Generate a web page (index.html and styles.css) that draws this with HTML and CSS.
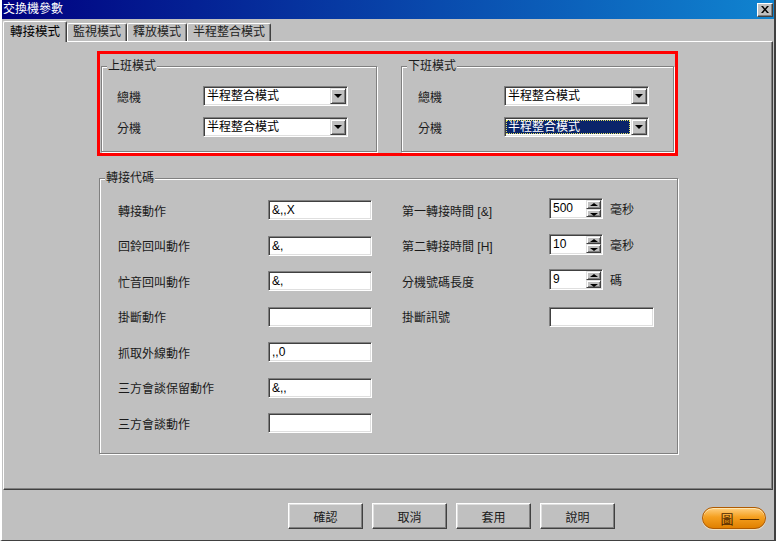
FILE: index.html
```html
<!DOCTYPE html>
<html lang="zh-Hant">
<head>
  <meta charset="UTF-8" />
  <title>交換機參數</title>
  <link rel="stylesheet" href="styles.css">
</head>
<body>
  <div class="window">
    <div class="titlebar">
      <span class="title">交換機參數</span>
      <span class="close">
        <svg width="8" height="7" viewBox="0 0 8 7"><path d="M0 0h2l2 2.5L6 0h2L5 3.5 8 7H6L4 4.5 2 7H0l3-3.5z" fill="#000"/></svg>
      </span>
    </div>

    <div class="tabs">
      <div class="tab active">轉接模式</div>
      <div class="tab">監視模式</div>
      <div class="tab">釋放模式</div>
      <div class="tab">半程整合模式</div>
    </div>

    <div class="panel">
      <div class="highlight">
        <div class="group shift day">
          <div class="group-title">上班模式</div>
          <div class="field">
            <span class="field-label">總機</span>
            <div class="combo"><span class="combo-text">半程整合模式</span><span class="combo-btn"></span></div>
          </div>
          <div class="field">
            <span class="field-label">分機</span>
            <div class="combo"><span class="combo-text">半程整合模式</span><span class="combo-btn"></span></div>
          </div>
        </div>

        <div class="group shift night">
          <div class="group-title">下班模式</div>
          <div class="field">
            <span class="field-label">總機</span>
            <div class="combo"><span class="combo-text">半程整合模式</span><span class="combo-btn"></span></div>
          </div>
          <div class="field">
            <span class="field-label">分機</span>
            <div class="combo focused"><span class="combo-text">半程整合模式</span><span class="combo-btn"></span></div>
          </div>
        </div>
      </div>

      <div class="group codes">
        <div class="group-title">轉接代碼</div>
        <div class="code-grid">
          <span class="code-label">轉接動作</span>
          <div class="textbox">&amp;,,X</div>
          <span class="code-label2">第一轉接時間 [&amp;]</span>
          <div class="spin-cell">
            <div class="spin"><span class="spin-text">500</span><span class="spin-btns"><span class="spin-up"></span><span class="spin-down"></span></span></div>
            <span class="unit">毫秒</span>
          </div>

          <span class="code-label">回鈴回叫動作</span>
          <div class="textbox">&amp;,</div>
          <span class="code-label2">第二轉接時間 [H]</span>
          <div class="spin-cell">
            <div class="spin"><span class="spin-text">10</span><span class="spin-btns"><span class="spin-up"></span><span class="spin-down"></span></span></div>
            <span class="unit">毫秒</span>
          </div>

          <span class="code-label">忙音回叫動作</span>
          <div class="textbox">&amp;,</div>
          <span class="code-label2">分機號碼長度</span>
          <div class="spin-cell">
            <div class="spin"><span class="spin-text">9</span><span class="spin-btns"><span class="spin-up"></span><span class="spin-down"></span></span></div>
            <span class="unit">碼</span>
          </div>

          <span class="code-label">掛斷動作</span>
          <div class="textbox"></div>
          <span class="code-label2">掛斷訊號</span>
          <div class="textbox wide"></div>

          <span class="code-label">抓取外線動作</span>
          <div class="textbox">,,0</div>

          <span class="code-label">三方會談保留動作</span>
          <div class="textbox">&amp;,,</div>

          <span class="code-label">三方會談動作</span>
          <div class="textbox"></div>
        </div>
      </div>
    </div>

    <div class="footer">
      <button class="btn">確認</button>
      <button class="btn">取消</button>
      <button class="btn">套用</button>
      <button class="btn">說明</button>
      <button class="pill"><span>圖</span><span class="pill-dash">一</span></button>
    </div>
  </div>
</body>
</html>
```

FILE: styles.css
```css
html, body {
  margin: 0;
  padding: 0;
  width: 776px;
  height: 541px;
  overflow: hidden;
  background-color: #c0c0c0;
  font-family: "Liberation Sans", "Noto Sans CJK TC", sans-serif;
  font-size: 12px;
  color: #1a1a1a;
}

.window {
  box-sizing: border-box;
  width: 776px;
  height: 541px;
  border-left: 2px solid #fff;
  border-right: 2px solid #404040;
  border-bottom: 1px solid #404040;
}

.titlebar {
  height: 19px;
  display: flex;
  align-items: center;
  justify-content: space-between;
  background: linear-gradient(to right, #000080, #1084d0);
  color: white;
}

.title {
  padding-left: 1px;
  line-height: 19px;
}

.close {
  width: 14px;
  height: 12px;
  margin-right: 1px;
  display: flex;
  align-items: center;
  justify-content: center;
  background-color: #c0c0c0;
  border: 1px solid;
  border-color: #fff #404040 #404040 #fff;
  box-shadow: inset -1px -1px #808080;
}

.tabs {
  display: flex;
  align-items: flex-end;
  height: 20px;
  margin-top: 2px;
  padding-left: 1px;
  position: relative;
  z-index: 1;
}

.tab {
  height: 17px;
  line-height: 17px;
  padding: 0 5px;
  border: 1px solid;
  border-color: #fff #404040 transparent #fff;
  border-bottom: none;
  border-radius: 2px 2px 0 0;
  box-shadow: inset -1px 0 #808080;
  color: #222;
}

.tab.active {
  height: 20px;
  line-height: 21px;
  margin-bottom: -1px;
  padding: 0 6px;
  background-color: #c0c0c0;
  font-size: 12.5px;
  color: #000;
}

.panel {
  box-sizing: border-box;
  height: 449px;
  margin: 0 1px;
  padding: 9px 0 0 93px;
  border: 1px solid;
  border-color: #fff #404040 #404040 #fff;
  box-shadow: inset -1px -1px #808080;
}

.highlight {
  box-sizing: border-box;
  width: 581px;
  height: 105px;
  border: 3px solid #ff0000;
  padding: 12px 0 0 1px;
  display: flex;
  gap: 24px;
}

.group {
  position: relative;
  box-sizing: border-box;
  border: 1px solid #808080;
  box-shadow: inset 1px 1px #fff, 1px 1px #fff;
}

.group-title {
  position: absolute;
  top: -8px;
  left: 5px;
  padding: 0 1px;
  background-color: #c0c0c0;
  line-height: 15px;
}

.shift {
  height: 86px;
  padding: 19px 0 0 15px;
  display: flex;
  flex-direction: column;
  gap: 11px;
}

.day {
  width: 276px;
}

.night {
  width: 273px;
  padding-left: 16px;
}

.field {
  display: flex;
  align-items: center;
}

.field-label {
  width: 86px;
}

.combo {
  box-sizing: border-box;
  width: 145px;
  height: 20px;
  display: flex;
  background-color: white;
  border: 1px solid;
  border-color: #808080 #fff #fff #808080;
  box-shadow: inset 1px 1px #404040, inset -1px -1px #dfdfdf;
  padding: 1px;
}

.combo-text {
  flex: 1;
  padding-left: 2px;
  line-height: 16px;
  color: #000;
}

.combo.focused .combo-text {
  margin: 1px 1px 1px 0;
  line-height: 14px;
  background-color: #0a246a;
  color: white;
  outline: 1px dotted #e0e060;
  outline-offset: -1px;
}

.combo-btn {
  position: relative;
  box-sizing: border-box;
  width: 16px;
  height: 16px;
  background-color: #c0c0c0;
  border: 1px solid;
  border-color: #dfdfdf #404040 #404040 #dfdfdf;
  box-shadow: inset 1px 1px #fff, inset -1px -1px #808080;
}

.combo-btn:after {
  content: "";
  position: absolute;
  left: 3px;
  top: 5px;
  border-left: 4px solid transparent;
  border-right: 4px solid transparent;
  border-top: 4px solid #000;
}

.codes {
  width: 579px;
  height: 276px;
  margin: 22px 0 0 2px;
  padding: 21px 0 0 18px;
}

.code-grid {
  display: grid;
  grid-template-columns: 150px 104px 177px auto;
  grid-auto-rows: 20px;
  row-gap: 15.5px;
  align-items: center;
}

.code-label {
  grid-column: 1;
}

.code-label2 {
  padding-left: 30px;
}

.textbox {
  box-sizing: border-box;
  width: 104px;
  height: 20px;
  padding: 2px 0 0 3px;
  line-height: 15px;
  background-color: white;
  border: 1px solid;
  border-color: #808080 #fff #fff #808080;
  box-shadow: inset 1px 1px #404040, inset -1px -1px #dfdfdf;
  color: #000;
}

.textbox.wide {
  width: 105px;
}

.spin-cell {
  display: flex;
  align-items: center;
  gap: 7px;
  margin-top: -3px;
}

.spin {
  box-sizing: border-box;
  width: 54px;
  height: 21px;
  padding: 1px;
  display: flex;
  background-color: white;
  border: 1px solid;
  border-color: #808080 #fff #fff #808080;
  box-shadow: inset 1px 1px #404040, inset -1px -1px #dfdfdf;
}

.spin-text {
  flex: 1;
  padding: 1px 0 0 2px;
  line-height: 15px;
  color: #000;
}

.spin-btns {
  width: 15px;
  display: flex;
  flex-direction: column;
}

.spin-up, .spin-down {
  position: relative;
  flex: 1;
  box-sizing: border-box;
  background-color: #c0c0c0;
  border: 1px solid;
  border-color: #dfdfdf #404040 #404040 #dfdfdf;
  box-shadow: inset 1px 1px #fff, inset -1px -1px #808080;
}

.spin-up:after, .spin-down:after {
  content: "";
  position: absolute;
  left: 3px;
  border-left: 4px solid transparent;
  border-right: 4px solid transparent;
}

.spin-up:after {
  top: 2px;
  border-bottom: 3px solid #000;
}

.spin-down:after {
  top: 3px;
  border-top: 3px solid #000;
}

.footer {
  display: flex;
  align-items: center;
  padding: 13px 8px 0 286px;
  gap: 9px;
}

.btn {
  box-sizing: border-box;
  width: 75px;
  height: 26px;
  padding: 0;
  font-family: inherit;
  font-size: 12px;
  color: #1a1a1a;
  background-color: #c0c0c0;
  border: 1px solid;
  border-color: #fff #404040 #404040 #fff;
  box-shadow: inset -1px -1px #808080, inset 1px 1px #dfdfdf;
}

.pill {
  box-sizing: border-box;
  width: 64px;
  height: 22px;
  margin: 4px 0 0 auto;
  padding: 0 0 0 8px;
  display: flex;
  align-items: center;
  justify-content: center;
  gap: 9px;
  font-family: inherit;
  font-size: 13px;
  color: #4a2600;
  border: 1px solid #b05a00;
  border-radius: 11px;
  background: linear-gradient(to bottom, #ffd080 0%, #f5a020 45%, #e08000 100%);
  box-shadow: inset 0 1px #ffe6b0, 0 1px #f0e0c0;
}

.pill-dash {
  transform: scaleX(1.6);
}
```
